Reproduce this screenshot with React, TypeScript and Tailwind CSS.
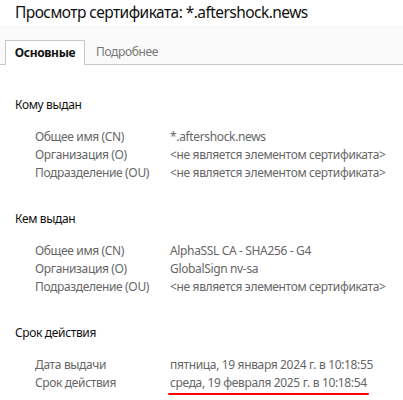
const sections: { title: string; rows: [string, string][] }[] = [
  {
    title: 'Кому выдан',
    rows: [
      ['Общее имя (CN)', '*.aftershock.news'],
      ['Организация (O)', '<не является элементом сертификата>'],
      ['Подразделение (OU)', '<не является элементом сертификата>'],
    ],
  },
  {
    title: 'Кем выдан',
    rows: [
      ['Общее имя (CN)', 'AlphaSSL CA - SHA256 - G4'],
      ['Организация (O)', 'GlobalSign nv-sa'],
      ['Подразделение (OU)', '<не является элементом сертификата>'],
    ],
  },
  {
    title: 'Срок действия',
    rows: [
      ['Дата выдачи', 'пятница, 19 января 2024 г. в 10:18:55'],
      ['Срок действия', 'среда, 19 февраля 2025 г. в 10:18:54'],
    ],
  },
]

export default function App() {
  return (
    <div className="w-[403px] h-[400px] bg-white overflow-hidden text-[12px] leading-[18px] tracking-[-0.35px]" style={{ fontFamily: '"Noto Sans", "Open Sans", sans-serif' }}>
      {/* Title */}
      <div className="h-[25px] px-[15px] text-[15.5px] leading-[25px] tracking-[-0.55px] text-[#111]">
        Просмотр сертификата: *.aftershock.news
      </div>

      {/* Tabs */}
      <div className="h-[40px] bg-[#fafafa] border-b border-[#c8c8c8] flex items-end pl-[5px]">
        <div className="h-[25px] w-[80px] -mb-px bg-white border border-b-0 border-[#c8c8c8] flex items-center justify-center font-bold text-[#111]">
          Основные
        </div>
        <div className="h-[25px] px-[11px] flex items-center text-[#777]">Подробнее</div>
      </div>

      {/* Content */}
      <div className="pt-[31px] px-[15px] flex flex-col gap-[28px]">
        {sections.map((s, si) => (
          <div key={s.title}>
            <div className="text-[#111]">{s.title}</div>
            <div className="mt-[14px] pl-[20px] text-[#666]">
              {s.rows.map(([label, value], ri) => {
                const marked = si === 2 && ri === 1
                return (
                  <div key={label} className="flex">
                    <div className="w-[135px] shrink-0">{label}</div>
                    <div className="whitespace-nowrap">
                      {marked ? (
                        <span className="relative">
                          {value}
                          <span className="absolute -left-[2px] -right-[2px] bottom-[-4px] h-[2px] bg-[#f00] rounded-full" />
                        </span>
                      ) : (
                        value
                      )}
                    </div>
                  </div>
                )
              })}
            </div>
          </div>
        ))}
      </div>
    </div>
  )
}
